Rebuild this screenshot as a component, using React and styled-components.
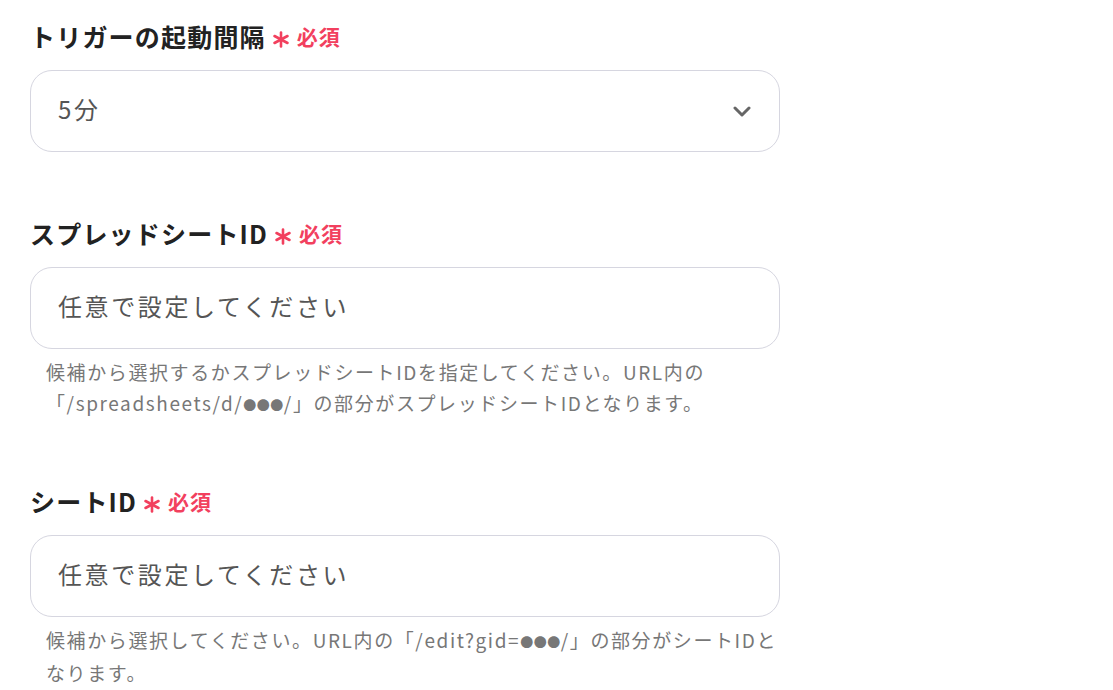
import styled, { createGlobalStyle } from 'styled-components'

const GlobalStyle = createGlobalStyle`
   body {
      margin: 0;
      background: #fff;
      font-family: "Noto Sans CJK JP", "Noto Sans", sans-serif;
   }
`

const Page = styled.div`
   width: 750px;
   padding: 18px 0 0 30px;
`

const Field = styled.div`
   display: flex;
   flex-direction: column;
   margin-bottom: 63px;
`

const Label = styled.div`
   display: flex;
   align-items: center;
   height: 35px;
   font-size: 25px;
   font-weight: 700;
   letter-spacing: 1.2px;
   color: #222;
   margin-bottom: 17px;
`

const Required = styled.span`
   display: inline-flex;
   align-items: center;
   margin-left: 6px;
   font-size: 21px;
   font-weight: 700;
   letter-spacing: 1px;
   color: #f2405e;

   svg {
      margin-right: 7px;
      margin-top: 7px;
   }
`

const Box = styled.div`
   display: flex;
   align-items: center;
   justify-content: space-between;
   box-sizing: border-box;
   height: 82px;
   padding: 0 28px 5px 27px;
   border: 1px solid #d6d6e0;
   border-radius: 22px;
   background: #fff;
   font-size: 24px;
   letter-spacing: 2.6px;
   color: #555;

   svg {
      margin-top: 5px;
   }
`

const Help = styled.p`
   margin: 8px 0 0;
   padding: 0 0 0 16px;
   font-size: 19px;
   line-height: 30.5px;
   letter-spacing: 1.6px;
   white-space: nowrap;
   color: #777;
`

const Dots = styled.span`
   font-size: 13px;
   letter-spacing: 0.5px;
   vertical-align: 1px;
`

const Asterisk = () => (
   <svg width="18" height="17" viewBox="0 0 18 17">
      <g stroke="#f2405e" strokeWidth="2.6" strokeLinecap="round">
         <line x1="9" y1="1.5" x2="9" y2="15.5" />
         <line x1="2.5" y1="5" x2="15.5" y2="12" />
         <line x1="15.5" y1="5" x2="2.5" y2="12" />
      </g>
   </svg>
)

const Chevron = () => (
   <svg width="18" height="11" viewBox="0 0 18 11">
      <path d="M2 2 L9 9 L16 2" fill="none" stroke="#666" strokeWidth="3" strokeLinecap="round" strokeLinejoin="round" />
   </svg>
)

const FieldLabel = ({ children }) => (
   <Label>
      {children}
      <Required>
         <Asterisk />
         必須
      </Required>
   </Label>
)

function App() {
   return (
      <Page>
         <GlobalStyle />
         <Field>
            <FieldLabel>トリガーの起動間隔</FieldLabel>
            <Box>
               5分
               <Chevron />
            </Box>
         </Field>
         <Field>
            <FieldLabel>スプレッドシートID</FieldLabel>
            <Box>任意で設定してください</Box>
            <Help>
               候補から選択するかスプレッドシートIDを指定してください。URL内の
               <br />
               「/spreadsheets/d/<Dots>●●●</Dots>/」の部分がスプレッドシートIDとなります。
            </Help>
         </Field>
         <Field>
            <FieldLabel>シートID</FieldLabel>
            <Box>任意で設定してください</Box>
            <Help>
               候補から選択してください。URL内の「/edit?gid=<Dots>●●●</Dots>/」の部分がシートIDと
               <br />
               なります。
            </Help>
         </Field>
      </Page>
   )
}

export default App
